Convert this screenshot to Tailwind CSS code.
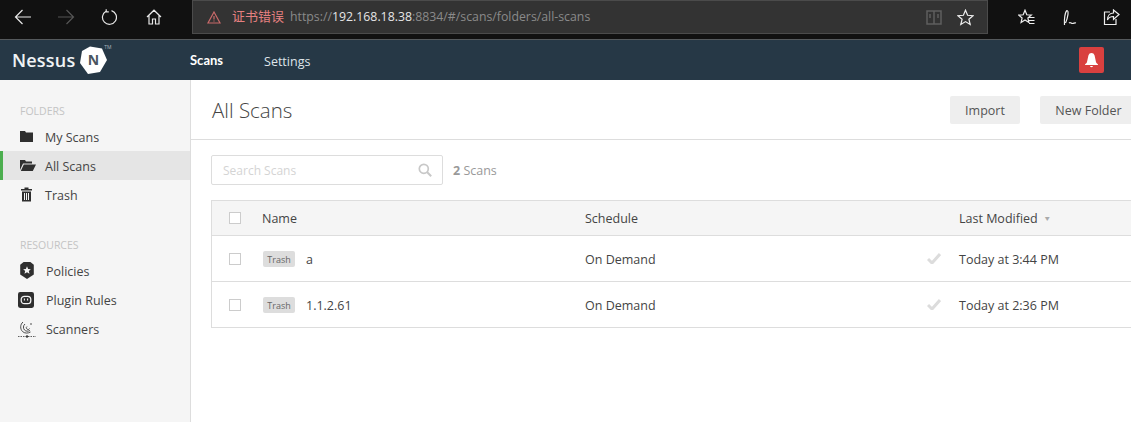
<!DOCTYPE html>
<html>
<head>
    <meta charset="UTF-8">
    <title>Nessus - All Scans</title>
    <script src="https://cdn.jsdelivr.net/npm/@tailwindcss/browser@4"></script>
</head>
<body class="bg-white overflow-hidden font-['Open_Sans','Noto_Sans_CJK_SC',sans-serif] text-[12.5px] text-[#333]">
<div class="w-[1131px] h-[422px] flex flex-col overflow-hidden">

    <!-- Browser toolbar -->
    <div class="h-[40px] shrink-0 bg-[#111111] border-b border-[#55595c] flex items-start">
        <div class="w-[192px] h-[34px] shrink-0 flex items-center pl-[14px] gap-[25px]">
            <svg class="w-[18px] h-[18px] text-[#e8e8e8]" viewBox="0 0 18 18" fill="none" stroke="currentColor" stroke-width="1.2"><path d="M17 9H1.5M8.5 2 1.5 9l7 7"/></svg>
            <svg class="w-[18px] h-[18px] text-[#555555]" viewBox="0 0 18 18" fill="none" stroke="currentColor" stroke-width="1.2"><path d="M1 9h15.5M9.5 2l7 7-7 7"/></svg>
            <svg class="w-[16px] h-[16px] text-[#e8e8e8] ml-[1px]" viewBox="0 0 16 16" fill="none" stroke="currentColor" stroke-width="1.2"><path d="M5 2.2A7 7 0 1 0 10.5 1.6M5.2 .2v2.6h2.6"/></svg>
            <svg class="w-[16px] h-[16px] text-[#e8e8e8] ml-[4px]" viewBox="0 0 16 16" fill="none" stroke="currentColor" stroke-width="1.2"><path d="M1 8 8 1.2 15 8M3 6.5V15h3.5v-5h3v5H13V6.500"/></svg>
        </div>
        <div class="w-[796px] h-[34px] shrink-0 bg-[#333333] border border-[#4b4b4b] flex items-center pl-[14px] pr-[13px]">
            <svg class="w-[14px] h-[13px] text-[#c96a6a] shrink-0" viewBox="0 0 14 13" fill="none" stroke="currentColor" stroke-width="1.2"><path d="M7 1 13 12H1ZM7 5v3.5M7 9.5v1"/></svg>
            <span class="ml-[11px] text-[13px] text-[#e58080] whitespace-nowrap">证书错误</span>
            <span class="ml-[6px] text-[12.3px] text-[#8a8a8a] whitespace-nowrap">https://<span class="text-[#e6e6e6]">192.168.18.38</span>:8834/#/scans/folders/all-scans</span>
            <svg class="w-[16px] h-[15px] ml-auto text-[#5f5f5f]" viewBox="0 0 16 15" fill="none" stroke="currentColor" stroke-width="1.5"><path d="M1 1h14v13H1ZM8 1v13M4 4v4M12 4v4"/></svg>
            <svg class="w-[17px] h-[17px] ml-[15px] text-[#eeeeee]" viewBox="0 0 17 17" fill="none" stroke="currentColor" stroke-width="1.2"><path d="M8.5 1.2 10.6 6.3l5.4.4-4.1 3.5 1.3 5.3-4.7-2.9-4.7 2.9 1.3-5.3L1 6.7l5.4-.4Z"/></svg>
        </div>
        <div class="flex-1 h-[34px] flex items-center pl-[30px] gap-[27px] text-[#eeeeee]">
            <svg class="w-[17px] h-[17px]" viewBox="0 0 17 17" fill="none" stroke="currentColor" stroke-width="1.2"><path d="M7 1.2 8.8 5.8l4.5.3-3.4 2.9 1 4.5L7 11l-3.9 2.5 1-4.5L.8 6.1l4.4-.3ZM11 8.5h5.5M11 11.5h5.5M11 14.5h5.5"/></svg>
            <svg class="w-[17px] h-[17px]" viewBox="0 0 17 17" fill="none" stroke="currentColor" stroke-width="1.2"><path d="M2.5 16C2 10 3 3 5 1.500c2 0 1 7-1.500 12.500M7 14c1.500-1.500 2 .5 3.500.5s2-1 3.500-.5"/></svg>
            <svg class="w-[17px] h-[17px] -ml-[3px]" viewBox="0 0 17 17" fill="none" stroke="currentColor" stroke-width="1.2"><path d="M7 3H1.500v12.500H13V10M16 5.500 10.500 1v3C7 4 4.500 6.500 4.500 11c1-2.500 3-3.500 6-3.500v3Z"/></svg>
        </div>
    </div>

    <!-- Nessus header -->
    <header class="h-[40px] shrink-0 bg-[#263846] flex items-center text-white">
        <div class="w-[190px] shrink-0 flex items-center pl-[12px]">
            <span class="text-[18px] leading-none font-semibold tracking-[0.2px] text-[#f0f3f5]">Nessus</span>
            <span class="relative ml-[3px] w-[30px] h-[30px] flex items-center justify-center">
                <svg class="absolute inset-0" viewBox="0 0 30 30"><path d="M12 1.500 24 3.500 29 15 22 27 10 29 2 18 4 6Z" fill="#ffffff"/></svg>
                <span class="relative text-[14px] font-bold leading-none text-[#4a5560]">N</span>
                <span class="absolute -right-[3px] top-0 text-[5px] leading-none text-[#aab4bc]">TM</span>
            </span>
        </div>
        <a class="font-['Lato',sans-serif] text-[13px] font-bold text-white pt-[2px]">Scans</a>
        <a class="ml-[41px] text-[12.5px] text-[#dfe5ea] pt-[4px]">Settings</a>
        <button class="ml-auto mr-[27px] w-[25px] h-[26px] rounded-[2px] bg-[#d9403f] flex items-center justify-center">
            <svg class="w-[13px] h-[15px]" viewBox="0 0 13 15" fill="#ffffff"><path d="M6.500 0C8 0 9 .8 9.600 2.500L11 9c.3 1 1 1.500 2 2.500V12H0v-.5C1 10.500 1.700 10 2 9l1.400-6.500C4 .8 5 0 6.500 0ZM5 13h3c0 1.500-3 1.500-3 0Z"/></svg>
        </button>
    </header>

    <div class="flex-1 flex min-h-0">
        <!-- Sidebar -->
        <aside class="w-[191px] shrink-0 bg-[#f5f5f5] border-r border-[#dddddd] pt-[23px]">
            <div class="pl-[20px] h-[16px] leading-[16px] text-[10.5px] text-[#c4c4c4]">FOLDERS</div>
            <div class="mt-[3px]">
                <div class="h-[29px] flex items-center pl-[20px] gap-[12px] text-[#444444]">
                    <svg class="w-[13px] h-[13px]" viewBox="0 0 13 13" fill="#2f2f2f"><path d="M0 1h5l1 1.500h7V12H0Z"/></svg>
                    <span class="pt-[4px]">My Scans</span>
                </div>
                <div class="h-[29px] flex items-center pl-[17px] gap-[9px] bg-[#e5e5e5] border-l-[3px] border-[#4cae4f] text-[#444444]">
                    <svg class="w-[16px] h-[13px]" viewBox="0 0 16 13" fill="#2f2f2f"><path d="M0 1h5l1 1.500h6v2H3L0 11ZM3.800 5.500H16L12.800 12H.8Z"/></svg>
                    <span class="pt-[4px]">All Scans</span>
                </div>
                <div class="h-[29px] flex items-center pl-[21px] gap-[13px] text-[#444444]">
                    <svg class="w-[11px] h-[15px]" viewBox="0 0 11 14" fill="#2f2f2f"><path d="M3.500 0h4v1.500H11V3H0V1.500h3.500ZM1 4h9v10H1ZM3 5.500v7h1v-7ZM5 5.500v7h1v-7ZM7 5.500v7h1v-7Z" fill-rule="evenodd"/></svg>
                    <span class="pt-[4px]">Trash</span>
                </div>
            </div>
            <div class="pl-[20px] mt-[28px] h-[16px] leading-[16px] text-[10.5px] text-[#c4c4c4]">RESOURCES</div>
            <div class="mt-[3px]">
                <div class="h-[29px] flex items-center pl-[20px] gap-[12px] text-[#444444]">
                    <svg class="w-[14px] h-[17px]" viewBox="0 0 12 15"><path d="M3 0h6l3 2.500V11L6 15 0 11V2.500Z" fill="#2f2f2f"/><path d="M6 3.800 7 6.100l2.400.2-1.800 1.600.6 2.400L6 9l-2.200 1.300.6-2.400-1.800-1.600L5 6.100Z" fill="#f5f5f5"/></svg>
                    <span class="pt-[4px]">Policies</span>
                </div>
                <div class="h-[29px] flex items-center pl-[18px] gap-[12px] text-[#444444]">
                    <svg class="w-[16px] h-[16px]" viewBox="0 0 15 15"><rect width="15" height="15" rx="2" fill="#2f2f2f"/><rect x="3" y="4" width="9" height="7" rx="3" fill="none" stroke="#f5f5f5" stroke-width="1.200"/><path d="M6 6v2M9 6v2" stroke="#f5f5f5"/></svg>
                    <span class="pt-[4px]">Plugin Rules</span>
                </div>
                <div class="h-[29px] flex items-center pl-[18px] gap-[10px] text-[#444444]">
                    <svg class="w-[18px] h-[18px]" viewBox="0 0 18 18" fill="none" stroke="#3a3a3a"><path d="M5 2C2 4.500 2 9 4.500 11.500 6.500 13.500 10 13.500 12.500 12M7 4C5 5.500 5 8.500 6.500 10 8 11.500 10 11.500 12 10.500M9 6.500C8 7.500 8 8 9 9s2 .5 2.500-.5" stroke-width=".9"/><path d="M0 16.500h18" stroke-width=".8" stroke-dasharray="1.500 1"/><circle cx="9" cy="16.500" r="1.200" fill="#3a3a3a" stroke="none"/><circle cx="13" cy="4" r=".8" fill="#3a3a3a" stroke="none"/></svg>
                    <span class="pt-[4px]">Scanners</span>
                </div>
            </div>
        </aside>

        <!-- Main content -->
        <main class="flex-1 min-w-0">
            <div class="h-[60px] border-b border-[#dddddd] flex items-center pl-[21px]">
                <h1 class="text-[20.5px] font-light text-[#444444] leading-none pt-[2px]">All Scans</h1>
                <button class="ml-auto w-[70px] h-[28px] bg-[#eeeeee] rounded-[2px] text-[12.5px] text-[#555555] pt-[4px]">Import</button>
                <button class="ml-[20px] w-[97px] h-[28px] bg-[#eeeeee] rounded-[2px] text-[12.5px] text-[#555555] pt-[4px] shrink-0 -mr-[6px]">New Folder</button>
            </div>

            <div class="flex items-center pl-[20px] mt-[15px]">
                <div class="w-[232px] h-[30px] border border-[#dddddd] rounded-[2px] flex items-center pl-[11px] pr-[10px]">
                    <span class="text-[12px] text-[#d4d4d4] pt-[2px]">Search Scans</span>
                    <svg class="w-[14px] h-[14px] ml-auto" viewBox="0 0 14 14" fill="none" stroke="#c8c8c8" stroke-width="1.700"><circle cx="5.800" cy="5.800" r="4.500"/><path d="M9 9l4.200 4.200" stroke-width="2"/></svg>
                </div>
                <span class="ml-[10px] text-[#999999] pt-[2px]"><span class="font-bold">2</span> Scans</span>
            </div>

            <div class="ml-[20px] mt-[15px] w-[960px] border-l border-t border-[#dddddd]">
                <div class="h-[35px] bg-[#f5f5f5] border-b border-[#dddddd] grid grid-cols-[50px_323px_342px_32px_1fr] items-center text-[#444444]">
                    <span class="ml-[17px] w-[12px] h-[12px] border border-[#cccccc] bg-white"></span>
                    <span class="pt-[2px]">Name</span>
                    <span class="pt-[2px]">Schedule</span>
                    <span></span>
                    <span class="flex items-center gap-[7px] pt-[2px]">Last Modified <span class="text-[5px] text-[#aaaaaa]">▼</span></span>
                </div>
                <div class="h-[46px] border-b border-[#dddddd] grid grid-cols-[50px_323px_342px_32px_1fr] items-center text-[#444444]">
                    <span class="ml-[17px] w-[12px] h-[12px] border border-[#cccccc]"></span>
                    <span class="flex items-center"><span class="w-[32px] h-[16px] ml-[1px] bg-[#dddddd] rounded-[2px] text-[9px] leading-[17px] text-center text-[#666666]">Trash</span><span class="ml-[11px] pt-[3px]">a</span></span>
                    <span class="pt-[3px]">On Demand</span>
                    <svg class="w-[14px] h-[11px]" viewBox="0 0 14 11" fill="none" stroke="#dcdcdc" stroke-width="3"><path d="M1 6l4 4 8-9"/></svg>
                    <span class="pt-[3px]">Today at 3:44 PM</span>
                </div>
                <div class="h-[46px] border-b border-[#dddddd] grid grid-cols-[50px_323px_342px_32px_1fr] items-center text-[#444444]">
                    <span class="ml-[17px] w-[12px] h-[12px] border border-[#cccccc]"></span>
                    <span class="flex items-center"><span class="w-[32px] h-[16px] ml-[1px] bg-[#dddddd] rounded-[2px] text-[9px] leading-[17px] text-center text-[#666666]">Trash</span><span class="ml-[11px] pt-[3px]">1.1.2.61</span></span>
                    <span class="pt-[3px]">On Demand</span>
                    <svg class="w-[14px] h-[11px]" viewBox="0 0 14 11" fill="none" stroke="#dcdcdc" stroke-width="3"><path d="M1 6l4 4 8-9"/></svg>
                    <span class="pt-[3px]">Today at 2:36 PM</span>
                </div>
            </div>
        </main>
    </div>
</div>
</body>
</html>
